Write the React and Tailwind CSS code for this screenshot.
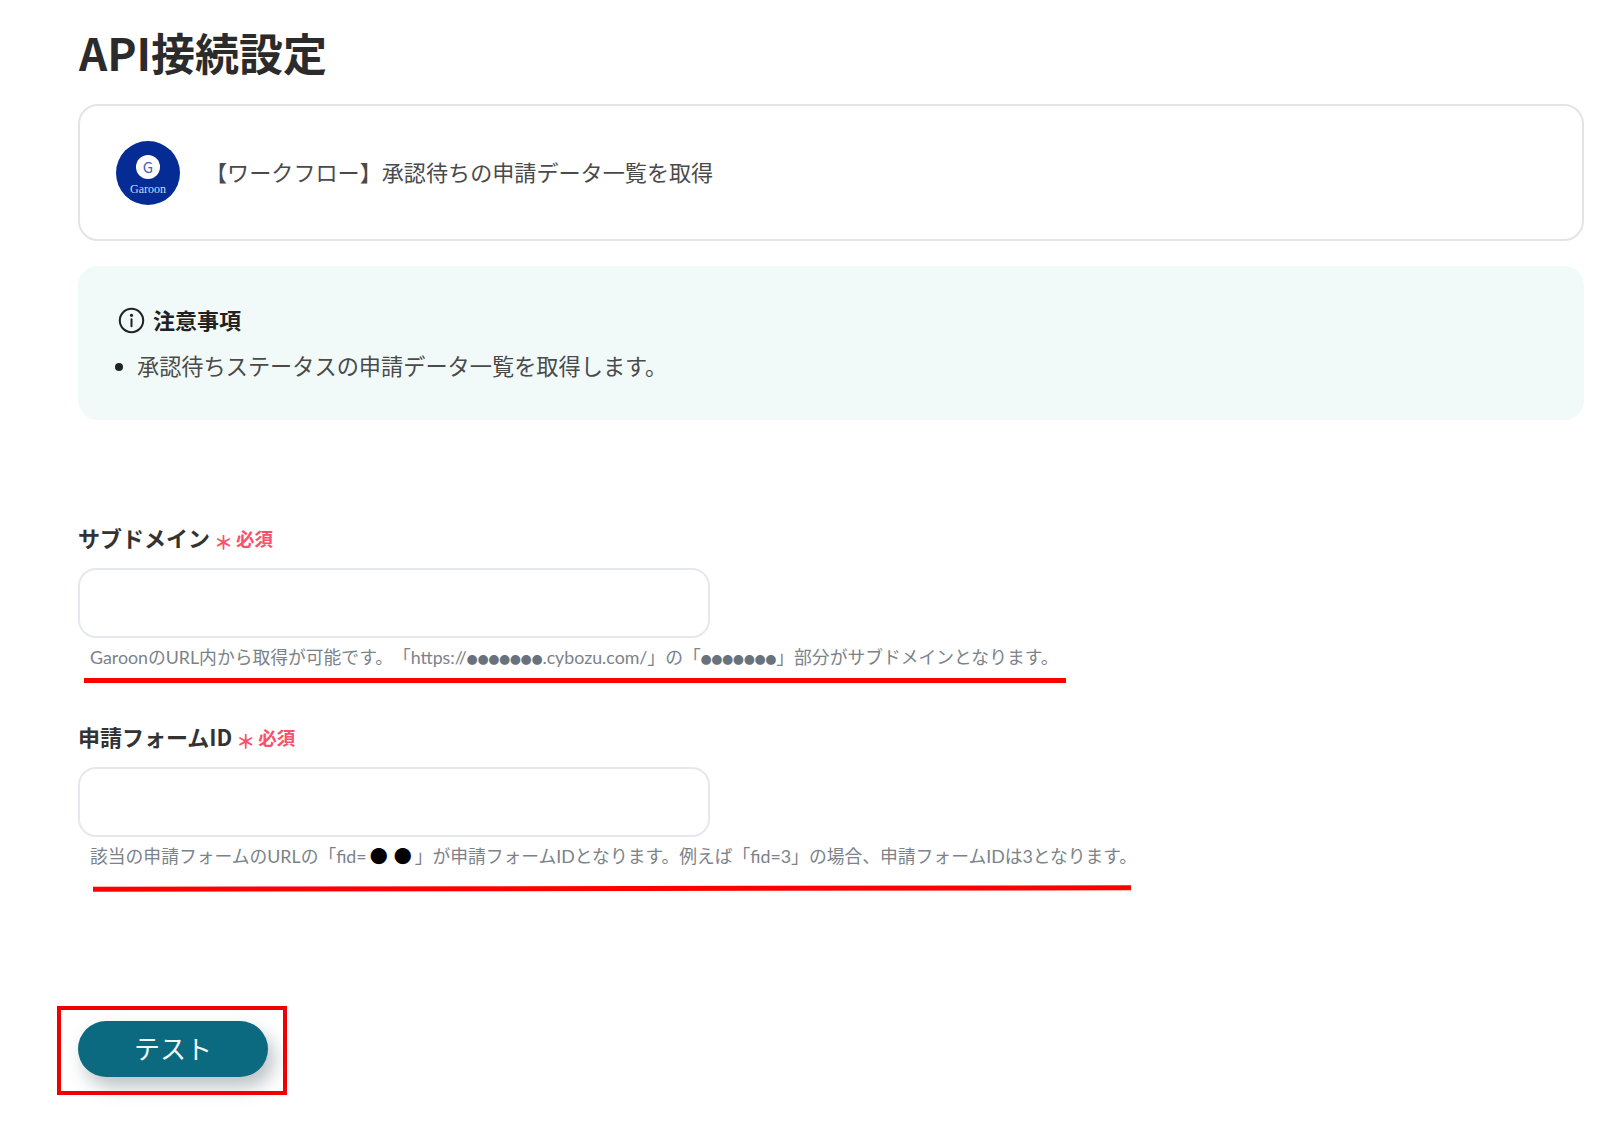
import React from "react";

const Required = () => (
  <span className="mt-[2px] ml-[4px] flex items-center text-[#f9506b]">
    <span className="mt-[6px] text-[19px] leading-none font-bold">＊</span>
    <span className="ml-[3px] text-[18.5px] font-bold">必須</span>
  </span>
);

const Field = ({ label, help, lineClass }) => (
  <div>
    <div className="flex h-[32px] items-center text-[22px] leading-[32px] font-bold text-[#333333]">
      {label}
      <Required />
    </div>
    <div className="mt-[15px] h-[70px] w-[632px] rounded-[18px] border-2 border-[#e5e8ee] bg-white" />
    <p
      className="mt-[5px] ml-[12px] whitespace-nowrap text-[17.8px] leading-[28px] text-[#7b8289] [text-spacing-trim:space-all]"
      style={{ fontFamily: 'Lato, "Noto Sans CJK JP", sans-serif' }}
    >
      {help}
    </p>
    <div className={lineClass} />
  </div>
);

const SmallDots = () => (
  <span className="font-['Noto_Sans_CJK_JP'] text-[10.8px] leading-none text-[#68727c]">●●●●●●●</span>
);
const BigDot = () => (
  <span className="px-[3px] font-['Noto_Sans_CJK_JP'] text-[18px] leading-none text-black">●</span>
);

export default function App() {
  return (
    <div
      className="h-[1133px] w-[1600px] overflow-hidden bg-white pt-[27px] pr-[16px] pl-[78px] text-[#444444]"
      style={{ fontFamily: '"Noto Sans CJK JP", "Noto Sans", sans-serif' }}
    >
      <h1 className="mb-[27px] ml-[1px] text-[44px] leading-[50px] font-bold text-[#2b2b2b]">API接続設定</h1>

      <div className="flex h-[137px] items-center gap-[25px] rounded-[20px] border-2 border-[#e4e4e4] bg-white pl-[36px]">
        <div className="flex h-[64px] w-[64px] shrink-0 flex-col items-center rounded-full bg-[#052c94] pt-[14px]">
          <div className="flex h-[24px] w-[24px] items-center justify-center rounded-full bg-white text-[15px] leading-none text-[#3f63b8]">
            G
          </div>
          <span
            className="mt-[2px] text-[12px] leading-[16px] text-[#cdd8f2]"
            style={{ fontFamily: '"Liberation Serif", serif' }}
          >
            Garoon
          </span>
        </div>
        <span className="-mt-[4px] text-[22.1px] leading-[30px] text-[#4a4a4a]">【ワークフロー】承認待ちの申請データ一覧を取得</span>
      </div>

      <div className="mt-[25px] h-[154px] rounded-[20px] bg-[#f1faf9] pt-[37px] pl-[40px]">
        <div className="flex h-[32px] items-center gap-[8px] text-[22px] leading-[32px] font-bold text-[#222222]">
          <svg className="mt-[2px]" width="27" height="27" viewBox="0 0 24 24" fill="none" stroke="#222222" strokeWidth="1.8" strokeLinecap="round">
            <circle cx="12" cy="12" r="10.4" />
            <path d="M12 11v6" />
            <circle cx="12" cy="7.4" r="0.6" fill="#222222" />
          </svg>
          注意事項
        </div>
        <ul className="mt-[14px] -ml-[4px] flex items-center gap-[14px]">
          <li className="mt-[3px] ml-[1px] h-[8px] w-[8px] rounded-full bg-[#222222]" />
          <li className="text-[22.2px] leading-[32px] text-[#4a4a4a]">承認待ちステータスの申請データ一覧を取得します。</li>
        </ul>
      </div>

      <div className="mt-[101px]">
        <Field
          label="サブドメイン"
          help={
            <>
              GaroonのURL内から取得が可能です。「https://
              <SmallDots />
              .cybozu.com/」の「
              <SmallDots />
              」部分がサブドメインとなります。
            </>
          }
          lineClass="mt-[7px] ml-[6px] h-[5px] w-[982px] bg-[#ff0000]"
        />
      </div>

      <div className="mt-[37px]">
        <Field
          label="申請フォームID"
          help={
            <>
              該当の申請フォームのURLの「fid=
              <BigDot />
              <BigDot />
              」が申請フォームIDとなります。例えば「fid=3」の場合、申請フォームIDは3となります。
            </>
          }
          lineClass="mt-[16px] ml-[15px] h-[5px] w-[1038px] -rotate-[0.08deg] bg-[#ff0000]"
        />
      </div>

      <div className="relative mt-[130px] w-fit">
        <button className="h-[56px] w-[190px] rounded-full bg-[#0b6a80] pb-[3px] text-[26px] text-[#f2f6f7] shadow-[6px_10px_18px_rgba(60,80,90,0.35)]">
          テスト
        </button>
        <div className="absolute -top-[15px] -right-[19px] -bottom-[18px] -left-[21px] border-4 border-[#f00000]" />
      </div>
    </div>
  );
}
